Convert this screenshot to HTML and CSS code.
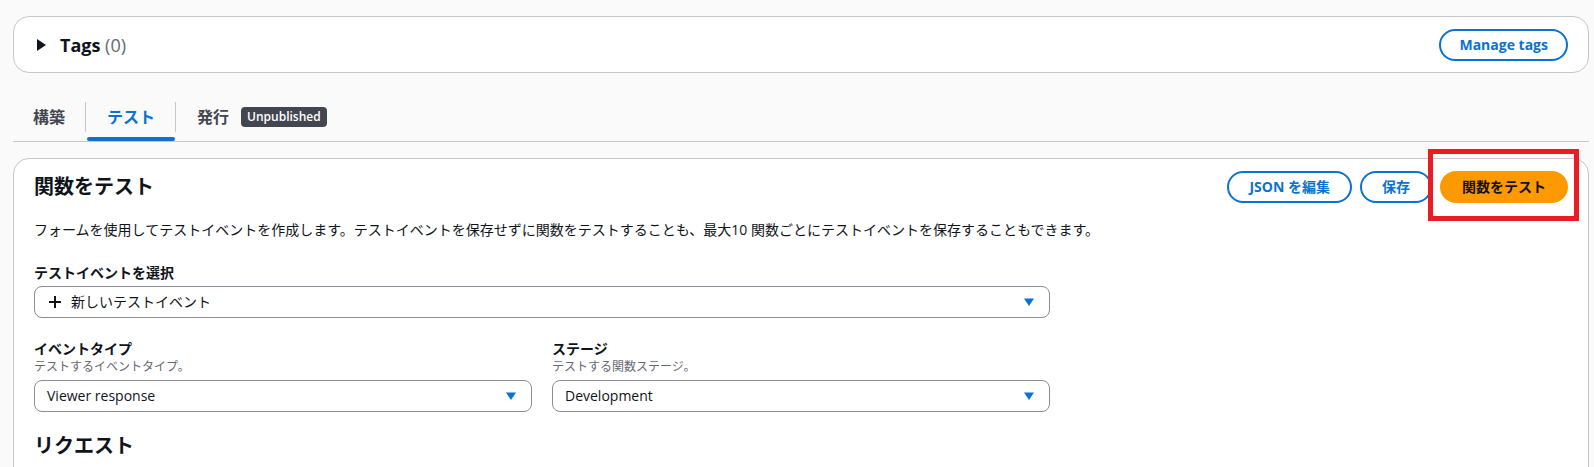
FILE: index.html
```html
<!DOCTYPE html>
<html lang="ja">
<head>
<meta charset="utf-8">
<title>関数をテスト</title>
<link rel="stylesheet" href="styles.css">
</head>
<body>
  <section class="panel tags-panel">
    <div class="tags-title">
      <svg class="expand-icon" viewBox="0 0 16 16" width="16" height="16" aria-hidden="true"><path d="M3 2 L12 8 L3 14 Z" fill="#0f141a"/></svg>
      <h2 class="tags-heading">Tags <span class="count">(0)</span></h2>
    </div>
    <button class="btn btn-tags">Manage tags</button>
  </section>

  <nav class="tabs">
    <div class="tab">
      <span class="tab-label">構築</span>
    </div>
    <span class="tab-sep"></span>
    <div class="tab tab-active">
      <span class="tab-label">テスト</span>
    </div>
    <span class="tab-sep"></span>
    <div class="tab">
      <span class="tab-label">発行 <span class="badge">Unpublished</span></span>
    </div>
  </nav>

  <section class="panel card">
    <header class="card-header">
      <h2 class="card-title">関数をテスト</h2>
      <div class="actions">
        <button class="btn">JSON を編集</button>
        <button class="btn">保存</button>
        <span class="highlight"><button class="btn btn-primary">関数をテスト</button></span>
      </div>
    </header>

    <p class="card-desc">フォームを使用してテストイベントを作成します。テストイベントを保存せずに関数をテストすることも、最大10 関数ごとにテストイベントを保存することもできます。</p>

    <div class="form">
      <div class="field">
        <label class="field-label">テストイベントを選択</label>
        <div class="select">
          <span class="select-value">
            <svg class="plus" viewBox="0 0 16 16" width="16" height="16" aria-hidden="true"><path d="M8 2 V14 M2 8 H14" stroke="#0f141a" stroke-width="2"/></svg>
            新しいテストイベント
          </span>
          <svg class="caret" viewBox="0 0 16 16" width="16" height="16" aria-hidden="true"><path d="M3 4.5 H13 L8 12 Z" fill="#0972d3"/></svg>
        </div>
      </div>

      <div class="field-row">
        <div class="field">
          <label class="field-label">イベントタイプ</label>
          <span class="field-hint">テストするイベントタイプ。</span>
          <div class="select">
            <span class="select-value">Viewer response</span>
            <svg class="caret" viewBox="0 0 16 16" width="16" height="16" aria-hidden="true"><path d="M3 4.5 H13 L8 12 Z" fill="#0972d3"/></svg>
          </div>
        </div>
        <div class="field">
          <label class="field-label">ステージ</label>
          <span class="field-hint">テストする関数ステージ。</span>
          <div class="select">
            <span class="select-value">Development</span>
            <svg class="caret" viewBox="0 0 16 16" width="16" height="16" aria-hidden="true"><path d="M3 4.5 H13 L8 12 Z" fill="#0972d3"/></svg>
          </div>
        </div>
      </div>
    </div>

    <h2 class="section-title">リクエスト</h2>
  </section>
</body>
</html>
```

FILE: styles.css
```css
* {
  box-sizing: border-box;
}

html, body {
  margin: 0;
  padding: 0;
}

body {
  background: #fafafa;
  color: #0f141a;
  font-family: "Open Sans", "Noto Sans CJK JP", sans-serif;
  font-size: 14px;
  line-height: 20px;
  overflow: hidden;
  height: 467px;
}

h2, p {
  margin: 0;
}

/* Containers */
.panel {
  background: #ffffff;
  border: 1px solid #c6c6cd;
  border-radius: 16px;
  margin-left: 13px;
  margin-right: 5px;
}

.tags-panel {
  margin-top: 16px;
  padding: 12px 20px 11px 20px;
  display: flex;
  align-items: center;
  justify-content: space-between;
}

.tags-title {
  display: flex;
  align-items: center;
  gap: 10px;
}

.expand-icon {
  display: block;
  margin-left: 0;
}

.tags-heading {
  font-size: 18px;
  line-height: 22px;
  font-weight: 700;
}

.count {
  font-weight: 400;
  color: #656871;
}

/* Buttons */
.btn {
  font-family: inherit;
  font-size: 14px;
  line-height: 20px;
  font-weight: 700;
  color: #0972d3;
  background: #ffffff;
  border: 2px solid #0972d3;
  border-radius: 20px;
  padding: 4px 20px;
  height: 32px;
  cursor: pointer;
  white-space: nowrap;
}

.btn-tags {
  padding: 4px 18px;
}

.btn-primary {
  background: #ff9900;
  border-color: #ff9900;
  color: #0f141a;
}

/* Tabs */
.tabs {
  display: flex;
  align-items: flex-start;
  margin: 29px 5px 0 13px;
  border-bottom: 1px solid #c6c6cd;
}

.tab {
  display: flex;
  flex-direction: column;
  padding: 0 20px 9px;
  position: relative;
  font-size: 16px;
  font-weight: 700;
  color: #424650;
}

.tab-label {
  height: 30px;
  display: flex;
  align-items: center;
  white-space: nowrap;
}

.tab-active {
  color: #0972d3;
}

.tab-active::after {
  content: "";
  position: absolute;
  left: 1px;
  right: 0;
  bottom: 0;
  height: 4px;
  border-radius: 2px;
  background: #0972d3;
}

.tab-sep {
  width: 1px;
  height: 30px;
  background: #c6c6cd;
}

.tab-sep + .tab {
  padding-left: 21px;
}

.badge {
  display: inline-block;
  margin-left: 12px;
  height: 20px;
  padding: 0 6px;
  border-radius: 4px;
  background: #424650;
  color: #ffffff;
  font-size: 12px;
  line-height: 20px;
  font-weight: 600;
}

/* Card */
.card {
  margin-top: 16px;
  padding: 12px 20px 20px;
  min-height: 400px;
}

.card-header {
  display: flex;
  align-items: center;
  justify-content: space-between;
}

.card-title {
  font-size: 20px;
  line-height: 28px;
  font-weight: 700;
}

.actions {
  display: flex;
  gap: 8px;
}

.highlight {
  position: relative;
  display: inline-flex;
}

.highlight::after {
  content: "";
  position: absolute;
  top: -22px;
  left: -12px;
  right: -11px;
  bottom: -18px;
  border: 5px solid #ec1c24;
  pointer-events: none;
}

.card-desc {
  margin-top: 17px;
  font-size: 14px;
  line-height: 20px;
}

/* Form */
.form {
  width: 1016px;
  margin-top: 23px;
  display: flex;
  flex-direction: column;
  gap: 21px;
}

.field {
  display: flex;
  flex-direction: column;
}

.field-label {
  font-size: 14px;
  font-weight: 700;
  line-height: 20px;
  margin-bottom: 3px;
}

.field-row .field-label {
  margin-bottom: 0;
}

.field-hint {
  font-size: 12px;
  line-height: 16px;
  color: #656871;
  margin-bottom: 5px;
}

.field-row {
  display: grid;
  grid-template-columns: 1fr 1fr;
  gap: 20px;
}

.select {
  height: 32px;
  border: 1px solid #8c8c94;
  border-radius: 8px;
  background: #ffffff;
  padding: 0 12px;
  display: flex;
  align-items: center;
  justify-content: space-between;
  font-size: 14px;
}

.select-value {
  display: flex;
  align-items: center;
  gap: 8px;
}

.plus,
.caret {
  display: block;
}

.section-title {
  margin-top: 20px;
  font-size: 20px;
  line-height: 28px;
  font-weight: 700;
}
```
